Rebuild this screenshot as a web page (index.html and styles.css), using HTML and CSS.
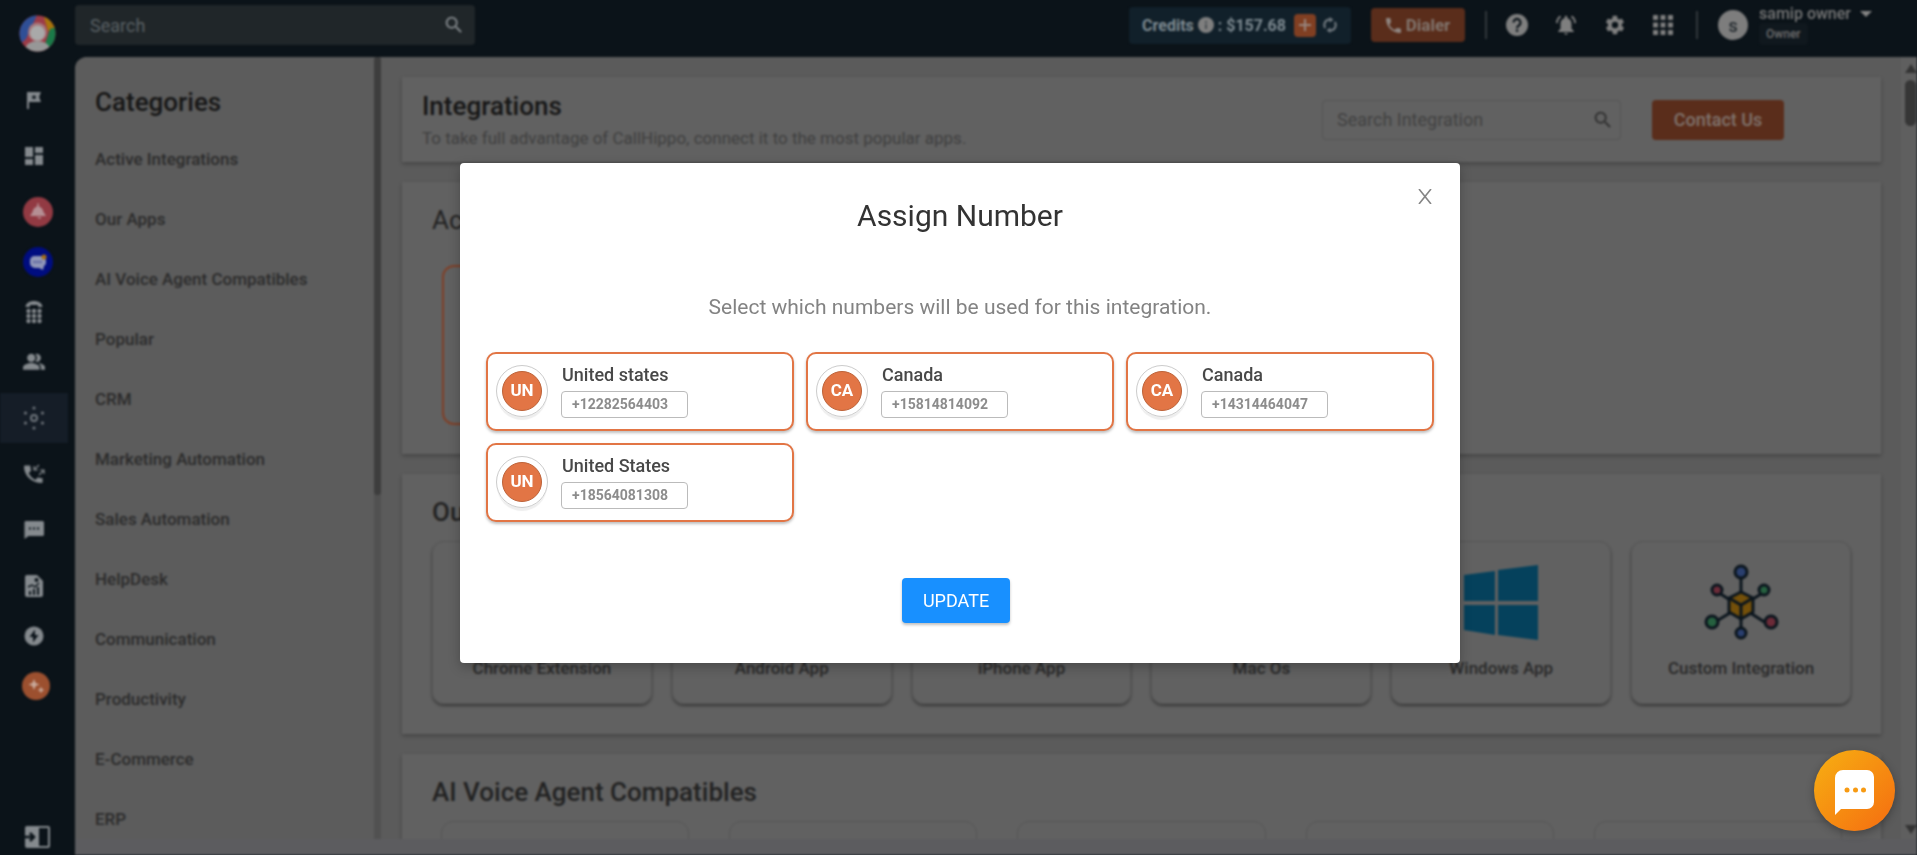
FILE: index.html
```html
<!DOCTYPE html>
<html lang="en">
<head>
  <meta charset="UTF-8">
  <meta name="viewport" content="width=device-width, initial-scale=1.0">
  <title>Integrations</title>
  <link rel="stylesheet" href="styles.css">
</head>
<body>
  <div class="app">
    <nav class="sidebar" aria-label="Main">
      <a class="logo" href="#" aria-label="Home">
        <svg width="37" height="37" viewBox="0 0 37 37">
          <defs><clipPath id="logoClip"><circle cx="18.500" cy="18.500" r="18"/></clipPath></defs>
          <g clip-path="url(#logoClip)">
            <rect width="37" height="37" fill="#9c3b47"/>
            <path d="M18 0 0 0 0 30 7 24Z" fill="#2f4f96"/>
            <path d="M25 2 37 2 37 14 29 16Z" fill="#a8740c"/>
            <path d="M31 14 37 12 37 37 26 29Z" fill="#1a7a48"/>
            <circle cx="18.500" cy="17" r="9.500" fill="#a5767a"/>
            <circle cx="18.500" cy="18" r="7.500" fill="#a9a9a9"/>
            <ellipse cx="18.500" cy="34" rx="12" ry="8" fill="#979797"/>
          </g>
        </svg>
      </a>
      <a class="nav-item" href="#" aria-label="Get started">
        <svg class="icon" width="20" height="20" viewBox="0 0 20 20"><path fill-rule="evenodd" d="M3 2h14l-2 5 2 5H5v7H3zM10 4.500l-.8 1.700-1.800.2 1.300 1.300-.3 1.800 1.600-.9 1.600.9-.3-1.800 1.300-1.300-1.800-.2z"/></svg>
      </a>
      <a class="nav-item spaced" href="#" aria-label="Dashboard">
        <svg class="icon" width="24" height="24" viewBox="0 0 24 24"><path d="M3 13h8V3H3zm0 8h8v-6H3zm10 0h8V11h-8zm0-18v6h8V3z"/></svg>
      </a>
      <a class="nav-item spaced" href="#" aria-label="Alerts">
        <span class="round red"><svg width="18" height="18" viewBox="0 0 18 18"><path fill="#b58f94" d="M8.500 0h1l.5 3.500c3 1 4 3 4.500 5.500L17 13H1l2.500-4C4 6.500 5 4.500 8 3.500zM7.500 14h5l-1.500 2z"/></svg></span>
      </a>
      <a class="nav-item" href="#" aria-label="Live chat">
        <span class="round blue"><svg width="18" height="18" viewBox="0 0 18 18"><path fill="#8f96b8" d="M5 3h7a5 5 0 0 1 5 5v2a4 4 0 0 1-2 3l-1 4-4-2H6a5 5 0 0 1-5-5V8a5 5 0 0 1 4-5z"/><circle cx="15" cy="4" r="2.500" fill="#a87012"/><path stroke="#3f4990" stroke-width="1.500" stroke-dasharray="2 1" d="M4.500 9h9"/></svg></span>
      </a>
      <a class="nav-item" href="#" aria-label="Dialpad">
        <svg class="icon" width="20" height="24" viewBox="0 0 20 24"><path d="M1.500 7C2-1 18-1 18.500 7H14V5H6v2z"/><circle cx="4.500" cy="11" r="2.200"/><circle cx="10" cy="11" r="2.200"/><circle cx="15.500" cy="11" r="2.200"/><circle cx="4.500" cy="16" r="2.200"/><circle cx="10" cy="16" r="2.200"/><circle cx="15.500" cy="16" r="2.200"/><circle cx="4.500" cy="21" r="2.200"/><circle cx="10" cy="21" r="2.200"/><circle cx="15.500" cy="21" r="2.200"/></svg>
      </a>
      <a class="nav-item" href="#" aria-label="Users">
        <svg class="icon" width="22" height="22" viewBox="0 0 24 24"><path d="M16.700 13.100C18.400 14.300 19.500 15.800 19.500 18v2.500H24V18c0-2.900-4-4.500-7.300-4.900z"/><circle cx="9" cy="7.500" r="4.500"/><path d="M15 12a4.500 4.500 0 1 0 0-9c-.5 0-1 .1-1.500.3a6.500 6.500 0 0 1 0 8.400c.5.200 1 .3 1.500.3zM9 13c-3.300 0-9 1.700-9 5v2.500h18V18c0-3.300-5.700-5-9-5z"/></svg>
      </a>
      <a class="nav-item spaced active" href="#" aria-label="Integrations">
        <svg class="icon" width="24" height="24" viewBox="0 0 24 24"><circle cx="12" cy="12" r="3" fill="none" stroke="#6f757c" stroke-width="2"/><circle cx="12" cy="2" r="1.600"/><circle cx="12" cy="22" r="1.600"/><circle cx="3.500" cy="7" r="1.600"/><circle cx="20.500" cy="7" r="1.600"/><circle cx="3.500" cy="17" r="1.600"/><circle cx="20.500" cy="17" r="1.600"/></svg>
      </a>
      <a class="nav-item spaced" href="#" aria-label="Call logs">
        <svg class="icon" width="24" height="24" viewBox="0 0 24 24"><path d="M20 16c-1.200 0-2.500-.2-3.600-.6-.3-.1-.7 0-1 .3l-2.200 2.200a15 15 0 0 1-6.600-6.600L8.800 9c.3-.2.400-.6.200-1C8.700 6.900 8.500 5.700 8.500 4.400c0-.5-.4-1-1-1H3c-.5 0-1 .5-1 1C2 13.800 10.200 21 19.600 21c.6 0 1-.4 1-1v-3c0-.5-.1-1-.6-1z"/><path fill="none" stroke="#858a8e" stroke-width="1.200" d="M17 3l-5 5m0-4v4h4M17 13l5-5m-4 0h4v4"/></svg>
      </a>
      <a class="nav-item spaced" href="#" aria-label="Messages">
        <svg class="icon" width="24" height="24" viewBox="0 0 24 24"><path d="M20.500 3h-17A1.500 1.500 0 0 0 2.500 4.500V21l4-3h14a1.500 1.500 0 0 0 1.500-1.500v-12A1.500 1.500 0 0 0 20.500 3zM9 11.500H7v-2h2zm4 0h-2v-2h2zm4 0h-2v-2h2z"/></svg>
      </a>
      <a class="nav-item spaced" href="#" aria-label="Reports">
        <svg class="icon" width="20" height="24" viewBox="0 0 20 24"><path d="M3 1h10l6 6v14a2 2 0 0 1-2 2H3a2 2 0 0 1-2-2V3a2 2 0 0 1 2-2z"/><path fill="#0b1319" d="M5 17h2v4H5zm4-2h2v6H9zm4-2h2v8h-2z"/><path fill="none" stroke="#0b1319" stroke-width="1.500" d="M4 13l4-2 3 2 4-4"/><circle cx="12.500" cy="6" r="2" fill="#0b1319"/></svg>
      </a>
      <a class="nav-item" href="#" aria-label="Power dialer">
        <svg class="icon" width="20" height="20" viewBox="0 0 20 20"><circle cx="10" cy="10" r="9.500"/><path fill="#0b1319" d="M11 3.500 5.500 11H9v5.500L14.500 9H11z"/></svg>
      </a>
      <a class="nav-item" href="#" aria-label="AI tools">
        <span class="round orange"><svg width="18" height="18" viewBox="0 0 18 18"><path fill="#c9aa9c" d="M7 2l1.600 3.900L12.500 7.500 8.600 9.100 7 13 5.400 9.100 1.500 7.500l3.900-1.600zM14 9.500l1 2.500 2.500 1-2.500 1-1 2.500-1-2.500-2.500-1 2.500-1z"/></svg></span>
      </a>
      <button class="collapse" type="button" aria-label="Expand menu">
        <svg width="27" height="24" viewBox="0 0 27 24"><rect x="1" y="1" width="25" height="22" rx="2" fill="#858a8e"/><rect x="15" y="3" width="9" height="18" fill="#0b1319"/><path fill="none" stroke="#0b1319" stroke-width="2.500" d="M0 12h9M6 8l4 4-4 4"/></svg>
      </button>
    </nav>

    <div class="workspace">
      <header class="topbar">
        <div class="top-search">
          <input type="search" placeholder="Search" aria-label="Search">
          <svg class="icon" width="22" height="22" viewBox="0 0 24 24"><path d="M15.500 14h-.8l-.3-.3a6.500 6.500 0 1 0-.7.700l.3.300v.8l5 5 1.500-1.500zm-6 0a4.500 4.500 0 1 1 0-9 4.500 4.500 0 0 1 0 9z"/></svg>
        </div>
        <div class="top-right">
          <div class="credits">
            <span>Credits</span>
            <svg class="icon" width="16" height="16" viewBox="0 0 16 16"><circle cx="8" cy="8" r="8"/><path fill="#4a4f53" d="M7 7h2v5H7zm0-3h2v2H7z"/></svg>
            <span class="amount">: $157.68</span>
            <button class="plus" type="button" aria-label="Add credits"><svg width="14" height="14" viewBox="0 0 14 14"><path stroke="#98867e" stroke-width="2" d="M7 1v12M1 7h12"/></svg></button>
            <button class="bare" type="button" aria-label="Refresh credits"><svg width="16" height="16" viewBox="0 0 16 16"><path fill="none" stroke="#737b81" stroke-width="2" d="M3.200 11A5.500 5.500 0 0 1 8 2.500M12.800 5A5.500 5.500 0 0 1 8 13.500"/><path fill="#737b81" d="M7.500 0l4 2.700-4 2.700zM8.500 16l-4-2.700 4-2.700z"/></svg></button>
          </div>
          <button class="dialer" type="button"><svg width="18" height="18" viewBox="0 0 18 18"><path fill="#8f8580" d="M4 8c1.400 2.800 3.600 5 6.400 6.300l2.100-2.100c.3-.3.700-.4 1-.2 1.100.4 2.300.5 3.500.5.600 0 1 .5 1 1V17c0 .5-.4 1-1 1C7.600 18 0 10.400 0 1c0-.5.500-1 1-1h3.500c.5 0 1 .5 1 1 0 1.200.2 2.400.6 3.500.1.400 0 .8-.3 1z"/></svg>Dialer</button>
          <span class="divider"></span>
          <div class="top-icons">
            <button class="bare" type="button" aria-label="Help"><svg class="icon" width="22" height="22" viewBox="0 0 22 22"><circle cx="11" cy="11" r="11"/><path fill="none" stroke="#0b1319" stroke-width="2.200" d="M7.500 8.500a3.500 3.500 0 1 1 5.300 3C11.500 12.300 11 12.800 11 14.200"/><rect x="9.900" y="15.500" width="2.300" height="2.300" fill="#0b1319"/></svg></button>
            <button class="bare" type="button" aria-label="Notifications"><svg class="icon" width="22" height="22" viewBox="0 0 24 24"><path d="M12 22.500c1.100 0 2-.7 2-1.700h-4c0 1 .9 1.700 2 1.700zM18 16v-5.500c0-3-1.600-5.200-4.500-5.900V3.500a1.500 1.500 0 0 0-3 0v1.100C7.600 5.300 6 7.500 6 10.500V16l-2.500 2.500v1h17v-1z"/><path fill="none" stroke="#7f7f7f" stroke-width="2" d="M6 2.500A10 10 0 0 0 2 10M18 2.500a10 10 0 0 1 4 7.500"/></svg></button>
            <button class="bare" type="button" aria-label="Settings"><svg class="icon" width="22" height="22" viewBox="0 0 24 24"><path d="M19.400 13a8 8 0 0 0 0-2l2.100-1.600c.2-.2.300-.4.100-.7l-2-3.400c-.1-.2-.4-.3-.6-.2l-2.500 1a7 7 0 0 0-1.700-1l-.4-2.700c0-.2-.2-.4-.5-.4h-4c-.2 0-.4.200-.5.400L9 5.100a7 7 0 0 0-1.700 1l-2.500-1c-.2-.1-.5 0-.6.200l-2 3.400c-.1.200-.1.500.1.700L4.500 11a8 8 0 0 0 0 2l-2.100 1.600c-.2.200-.3.500-.1.700l2 3.400c.1.200.4.300.6.200l2.500-1a7 7 0 0 0 1.700 1l.4 2.700c0 .2.200.4.500.4h4c.2 0 .5-.2.500-.4l.4-2.700a7 7 0 0 0 1.700-1l2.500 1c.2.100.5 0 .6-.2l2-3.400c.1-.2.100-.5-.1-.7zM12 15.500a3.500 3.500 0 1 1 0-7 3.500 3.500 0 0 1 0 7z"/></svg></button>
            <button class="bare" type="button" aria-label="Apps"><svg class="icon" width="20" height="20" viewBox="0 0 20 20"><path d="M0 0h5v5H0zM7.500 0h5v5h-5zM15 0h5v5h-5zM0 7.500h5v5H0zM7.500 7.500h5v5h-5zM15 7.500h5v5h-5zM0 15h5v5H0zM7.500 15h5v5h-5zM15 15h5v5h-5z"/></svg></button>
          </div>
          <span class="divider"></span>
          <div class="user">
            <span class="user-avatar">s</span>
            <div class="user-info">
              <button class="user-name" type="button">samip owner <svg width="12" height="6" viewBox="0 0 12 6"><path fill="#858585" d="M0 0h12L6 6z"/></svg></button>
              <span class="user-role">Owner</span>
            </div>
          </div>
        </div>
      </header>

      <div class="page">
        <aside class="categories">
          <div class="category-list">
            <h2>Categories</h2>
            <a href="#">Active Integrations</a>
            <a href="#">Our Apps</a>
            <a href="#">AI Voice Agent Compatibles</a>
            <a href="#">Popular</a>
            <a href="#">CRM</a>
            <a href="#">Marketing Automation</a>
            <a href="#">Sales Automation</a>
            <a href="#">HelpDesk</a>
            <a href="#">Communication</a>
            <a href="#">Productivity</a>
            <a href="#">E-Commerce</a>
            <a href="#">ERP</a>
          </div>
          <div class="list-scroll"><div class="list-thumb"></div></div>
        </aside>

        <main class="content">
          <section class="panel intro">
            <div>
              <h1>Integrations</h1>
              <p>To take full advantage of CallHippo, connect it to the most popular apps.</p>
            </div>
            <div class="intro-actions">
              <div class="integration-search">
                <input type="search" placeholder="Search Integration" aria-label="Search Integration">
                <svg width="22" height="22" viewBox="0 0 24 24"><path fill="#2f2f2f" d="M15.500 14h-.8l-.3-.3a6.500 6.500 0 1 0-.7.700l.3.300v.8l5 5 1.500-1.500zm-6 0a4.500 4.500 0 1 1 0-9 4.500 4.500 0 0 1 0 9z"/></svg>
              </div>
              <button class="contact" type="button">Contact Us</button>
            </div>
          </section>

          <section class="panel active-panel">
            <h2>Active Integrations</h2>
            <div class="active-card"></div>
          </section>

          <section class="panel apps-panel">
            <h2>Our Apps</h2>
            <div class="tiles">
              <a class="tile" href="#"><span class="tile-art"></span>Chrome Extension</a>
              <a class="tile" href="#"><span class="tile-art"></span>Android App</a>
              <a class="tile" href="#"><span class="tile-art"></span>iPhone App</a>
              <a class="tile" href="#"><span class="tile-art"></span>Mac Os</a>
              <a class="tile" href="#">
                <span class="tile-art"><svg width="76" height="76" viewBox="0 0 76 76"><path fill="#05415c" d="M1 11l31-4v30H1zM35 6l40-5v36H35zM1 41h31v30L1 66zM35 41h40v35l-40-5z"/></svg></span>
                Windows App
              </a>
              <a class="tile" href="#">
                <span class="tile-art">
                  <svg width="76" height="76" viewBox="0 0 76 76">
                    <g stroke="#0b151d" stroke-width="3"><path d="M38 8v60M13 27l50 32M63 27 12 58"/></g>
                    <path fill="#74500a" stroke="#0b151d" stroke-width="3" stroke-linejoin="round" d="M38 28l12 6v14l-12 7-12-7V34z"/>
                    <path fill="none" stroke="#0b151d" stroke-width="3" d="M26 34l12 7 12-7M38 41v14"/>
                    <g stroke="#0b151d" stroke-width="3">
                      <circle cx="38" cy="8" r="6" fill="#2a3f6e"/><circle cx="38" cy="69" r="5" fill="#2a3f6e"/>
                      <circle cx="14" cy="26" r="5" fill="#6b2b38"/><circle cx="61" cy="26" r="5" fill="#26603f"/>
                      <circle cx="9" cy="58" r="6" fill="#26603f"/><circle cx="68" cy="58" r="6" fill="#6b2b38"/>
                    </g>
                  </svg>
                </span>
                Custom Integration
              </a>
            </div>
          </section>

          <section class="panel voice-panel">
            <h2>AI Voice Agent Compatibles</h2>
            <div class="voice-tiles">
              <div class="voice-tile"></div>
              <div class="voice-tile"></div>
              <div class="voice-tile"></div>
              <div class="voice-tile"></div>
              <div class="voice-tile"></div>
            </div>
          </section>
        </main>

        <div class="page-scroll">
          <svg width="12" height="9" viewBox="0 0 12 9"><path fill="#333" d="M6 0l6 9H0z"/></svg>
          <div class="page-thumb"></div>
          <svg class="down" width="12" height="9" viewBox="0 0 12 9"><path fill="#333" d="M6 9l6-9H0z"/></svg>
        </div>
      </div>
    </div>
  </div>

  <div class="modal-wrap">
    <div class="modal" role="dialog" aria-modal="true" aria-labelledby="modalTitle">
      <button class="close" type="button" aria-label="Close"><svg width="14" height="15" viewBox="0 0 14 15"><path stroke="#858585" stroke-width="1.600" d="M1 0l12 15M13 0 1 15"/></svg></button>
      <h2 id="modalTitle">Assign Number</h2>
      <p>Select which numbers will be used for this integration.</p>
      <div class="numbers">
        <button class="number" type="button">
          <span class="flag-ring"><span class="flag">UN</span></span>
          <span class="number-info"><span class="country">United states</span><span class="phone">+12282564403</span></span>
        </button>
        <button class="number" type="button">
          <span class="flag-ring"><span class="flag">CA</span></span>
          <span class="number-info"><span class="country">Canada</span><span class="phone">+15814814092</span></span>
        </button>
        <button class="number" type="button">
          <span class="flag-ring"><span class="flag">CA</span></span>
          <span class="number-info"><span class="country">Canada</span><span class="phone">+14314464047</span></span>
        </button>
        <button class="number" type="button">
          <span class="flag-ring"><span class="flag">UN</span></span>
          <span class="number-info"><span class="country">United States</span><span class="phone">+18564081308</span></span>
        </button>
      </div>
      <button class="update" type="button">UPDATE</button>
    </div>
  </div>

  <button class="chat" type="button" aria-label="Open chat">
    <svg width="40" height="46" viewBox="0 0 40 46"><path fill="#fff" d="M8 0h24a7 7 0 0 1 7 7v25a7 7 0 0 1-7 7H6l-6 6V8a8 8 0 0 1 8-8z"/><circle cx="12" cy="20" r="2.500" fill="#f79a13"/><circle cx="20.500" cy="20" r="2.500" fill="#f79a13"/><circle cx="28.500" cy="20" r="2.500" fill="#f79a13"/></svg>
  </button>
</body>
</html>
```

FILE: styles.css
```css
* {
  box-sizing: border-box;
}
body {
  margin: 0;
  font-family: Roboto, "Liberation Sans", sans-serif;
  background-color: #0b1319;
  height: 100vh;
  overflow: hidden;
}
h1, h2, p {
  margin: 0;
}
a {
  color: inherit;
  text-decoration: none;
}
button, input {
  font-family: inherit;
  border: none;
  padding: 0;
}
button {
  cursor: pointer;
}
svg {
  display: block;
  flex: none;
}
.bare {
  background: none;
}

/* page behind the dialog */
.app {
  display: flex;
  height: 100vh;
  filter: blur(1px);
}
.icon {
  fill: #858a8e;
}

/* sidebar */
.sidebar {
  width: 75px;
  flex: none;
  display: flex;
  flex-direction: column;
  padding: 15px 0 6px;
}
.logo {
  margin: 0 0 23px 19px;
}
.nav-item {
  width: 68px;
  height: 50px;
  flex: none;
  display: flex;
  align-items: center;
  justify-content: center;
}
.nav-item.spaced {
  margin-top: 6px;
}
.nav-item.active {
  background-color: #151d27;
}
.active .icon {
  fill: #6f757c;
}
.round {
  width: 30px;
  height: 30px;
  margin-left: 8px;
  border-radius: 50%;
  display: flex;
  align-items: center;
  justify-content: center;
}
.round.red {
  background-color: #923a43;
}
.round.blue {
  background-color: #000d80;
}
.round.orange {
  background-color: #9c502f;
  width: 28px;
  height: 28px;
  margin-left: 4px;
}
.collapse {
  background: none;
  margin: auto 0 0 24px;
  width: 27px;
}

/* top bar */
.workspace {
  flex: 1;
  min-width: 0;
  display: flex;
  flex-direction: column;
}
.topbar {
  height: 57px;
  flex: none;
  display: flex;
  justify-content: space-between;
  padding-right: 45px;
}
.top-search {
  width: 400px;
  height: 40px;
  margin-top: 5px;
  padding: 0 10px 0 15px;
  background-color: #202629;
  border-radius: 4px;
  display: flex;
  align-items: center;
}
.top-search input, .integration-search input {
  flex: 1;
  min-width: 0;
  background: none;
  font-size: 18px;
}
.top-search input::placeholder {
  color: #596064;
}
.top-right {
  display: flex;
  align-items: center;
  height: 50px;
  color: #7f8b92;
}
.top-right .icon {
  fill: #7f7f7f;
}
.credits {
  width: 222px;
  height: 37px;
  padding: 0 13px;
  background-color: #11202a;
  border-radius: 4px;
  display: flex;
  align-items: center;
  gap: 4px;
  font-size: 16px;
  font-weight: 700;
  white-space: nowrap;
}
.plus {
  width: 22px;
  height: 23px;
  flex: none;
  margin: 0 2px 0 auto;
  background-color: #803f22;
  border-radius: 4px;
  display: flex;
  align-items: center;
  justify-content: center;
}
.dialer {
  width: 94px;
  height: 34px;
  margin: 0 20px;
  background-color: #5a2d1b;
  border-radius: 4px;
  color: #82766f;
  font-size: 17px;
  font-weight: 700;
  display: flex;
  align-items: center;
  justify-content: center;
  gap: 5px;
}
.dialer svg {
  width: 15px;
  height: 15px;
}
.divider {
  width: 2px;
  height: 28px;
  background-color: #32383c;
}
.top-icons {
  display: flex;
  align-items: center;
  gap: 27px;
  margin: 0 23px 0 19px;
}
.user {
  display: flex;
  align-items: center;
  margin-left: 20px;
  gap: 11px;
}
.user-avatar {
  width: 30px;
  height: 30px;
  border-radius: 50%;
  background-color: #7d7d7d;
  color: #22292e;
  font-size: 18px;
  font-weight: 500;
  text-align: center;
  line-height: 31px;
}
.user-name {
  background: none;
  color: #787878;
  font-size: 16px;
  font-weight: 500;
  line-height: 18px;
  display: flex;
  align-items: center;
  gap: 9px;
}
.user-role {
  display: inline-block;
  background-color: #10181e;
  border-radius: 4px;
  color: #6e6e6e;
  font-size: 12px;
  font-weight: 500;
  line-height: 22px;
  padding: 0 7px;
}

/* page */
.page {
  flex: 1;
  min-height: 0;
  display: flex;
  background-color: #5b5b5b;
  border-top-left-radius: 12px;
  border-bottom: 16px solid #5c5c5f;
  overflow: hidden;
}
.categories {
  width: 306px;
  flex: none;
  display: flex;
  background-color: #5c5c5c;
}
.category-list {
  flex: 1;
  padding: 29px 20px 0;
  color: #2b2b2b;
  font-size: 17px;
  font-weight: 500;
}
.category-list h2 {
  color: #161616;
  font-size: 26px;
  font-weight: 500;
  line-height: 32px;
  margin-bottom: 11px;
}
.category-list a {
  display: block;
  line-height: 60px;
}
.list-scroll {
  width: 7px;
  background-color: #515151;
}
.list-thumb {
  height: 56%;
  background-color: #3d3d3d;
  border-radius: 4px;
}
.content {
  flex: 1;
  min-width: 0;
  padding: 20px 20px 0 21px;
  display: flex;
  flex-direction: column;
  gap: 20px;
  overflow: hidden;
}
.panel {
  flex: none;
  background-color: #616161;
  box-shadow: 0 2px 4px rgba(0, 0, 0, 0.25);
}
.panel h1, .panel h2 {
  font-size: 26px;
  font-weight: 500;
  line-height: 32px;
}
.panel h1 {
  color: #161616;
}
.panel h2 {
  color: #222;
  font-weight: 400;
}
.intro {
  height: 85px;
  padding: 0 97px 0 20px;
  display: flex;
  align-items: center;
  justify-content: space-between;
}
.intro p {
  color: #3f3f3f;
  font-size: 17px;
  line-height: 24px;
  margin-top: 4px;
}
.intro-actions {
  display: flex;
  gap: 31px;
}
.integration-search {
  width: 299px;
  height: 40px;
  padding: 0 6px 0 14px;
  border: 1px solid #545454;
  border-radius: 4px;
  display: flex;
  align-items: center;
}
.integration-search input::placeholder {
  color: #414141;
}
.contact {
  width: 132px;
  background-color: #5a2d1b;
  border-radius: 4px;
  color: #80746e;
  font-size: 18px;
  font-weight: 500;
}
.active-panel {
  padding: 22px 40px 29px 30px;
}
.active-card {
  width: 220px;
  height: 160px;
  margin: 29px 0 0 10px;
  border: 2px solid #803f26;
  border-radius: 12px;
}
.apps-panel {
  padding: 22px 30px 30px;
}
.apps-panel h2, .voice-panel h2 {
  font-weight: 500;
}
.tiles {
  display: grid;
  grid-template-columns: repeat(6, 1fr);
  gap: 20px;
  margin-top: 13px;
}
.tile {
  height: 163px;
  border: 1px solid #565656;
  border-radius: 12px;
  box-shadow: 0 2px 3px rgba(0, 0, 0, 0.4);
  color: #292929;
  font-size: 17px;
  font-weight: 500;
  line-height: 20px;
  text-align: center;
}
.tile-art {
  height: 76px;
  margin: 22px 0 18px;
  display: flex;
  justify-content: center;
}
.voice-panel {
  padding: 22px 39px 0;
  height: 260px;
}
.voice-panel h2 {
  margin-left: -9px;
}
.voice-tiles {
  display: grid;
  grid-template-columns: repeat(5, 1fr);
  gap: 40px;
  margin-top: 13px;
}
.voice-tile {
  height: 160px;
  border: 1px solid #565656;
  border-radius: 12px;
}
.page-scroll {
  width: 16px;
  flex: none;
  background-color: #5f5f5f;
  display: flex;
  flex-direction: column;
  align-items: center;
  padding: 7px 0 5px 3px;
}
.page-thumb {
  width: 11px;
  height: 46px;
  margin-top: 7px;
  background-color: #363636;
  border-radius: 6px;
}
.page-scroll .down {
  margin-top: auto;
}

/* dialog */
.modal-wrap {
  position: fixed;
  inset: 0;
  display: flex;
  align-items: flex-start;
  justify-content: center;
  padding: 163px 0 0 3px;
}
.modal {
  position: relative;
  width: 1000px;
  padding: 31px 26px 40px;
  background-color: #fff;
  border-radius: 4px;
  box-shadow: 0 4px 12px rgba(0, 0, 0, 0.25);
  text-align: center;
}
.modal h2 {
  color: #333;
  font-size: 30px;
  font-weight: 400;
  line-height: 44px;
}
.modal p {
  color: #838383;
  font-size: 21px;
  line-height: 28px;
  margin: 55px 0 31px;
}
.close {
  position: absolute;
  top: 26px;
  right: 28px;
  background: none;
}
.numbers {
  display: grid;
  grid-template-columns: repeat(3, 1fr);
  gap: 12px;
}
.number {
  height: 79px;
  padding: 0 8px 2px;
  background-color: #fff;
  border: 2px solid #e27545;
  border-radius: 10px;
  box-shadow: 0 2px 3px rgba(0, 0, 0, 0.25);
  display: flex;
  align-items: center;
  gap: 13px;
  text-align: left;
}
.flag-ring {
  width: 52px;
  height: 52px;
  flex: none;
  padding: 5px;
  border: 1px solid #ccc;
  border-radius: 50%;
  box-shadow: 0 4px 1px -1px #eee;
}
.flag {
  display: block;
  height: 40px;
  border: 1px solid #bd6238;
  border-radius: 50%;
  background-color: #e27545;
  color: #fff;
  font-size: 17px;
  font-weight: 700;
  line-height: 36px;
  text-align: center;
}
.number-info {
  display: flex;
  flex-direction: column;
  align-items: flex-start;
  gap: 5px;
}
.country {
  color: #484848;
  font-size: 18px;
  font-weight: 500;
  line-height: 22px;
  padding-left: 1px;
}
.phone {
  width: 127px;
  height: 27px;
  padding-left: 10px;
  border: 1px solid #bbb;
  border-radius: 4px;
  color: #8c8c8c;
  font-size: 14px;
  font-weight: 700;
  line-height: 25px;
}
.update {
  width: 108px;
  height: 45px;
  margin: 56px 8px 0 0;
  background-color: #1890ff;
  border-radius: 4px;
  box-shadow: 0 2px 3px rgba(0, 0, 0, 0.25);
  color: #fff;
  font-size: 18px;
}

/* chat launcher */
.chat {
  position: fixed;
  right: 22px;
  bottom: 24px;
  width: 81px;
  height: 81px;
  padding: 5px 0 0 1px;
  border-radius: 50%;
  background: linear-gradient(135deg, #f7b012, #f56c10);
  box-shadow: 0 3px 8px rgba(0, 0, 0, 0.3);
  display: flex;
  align-items: center;
  justify-content: center;
}
```
